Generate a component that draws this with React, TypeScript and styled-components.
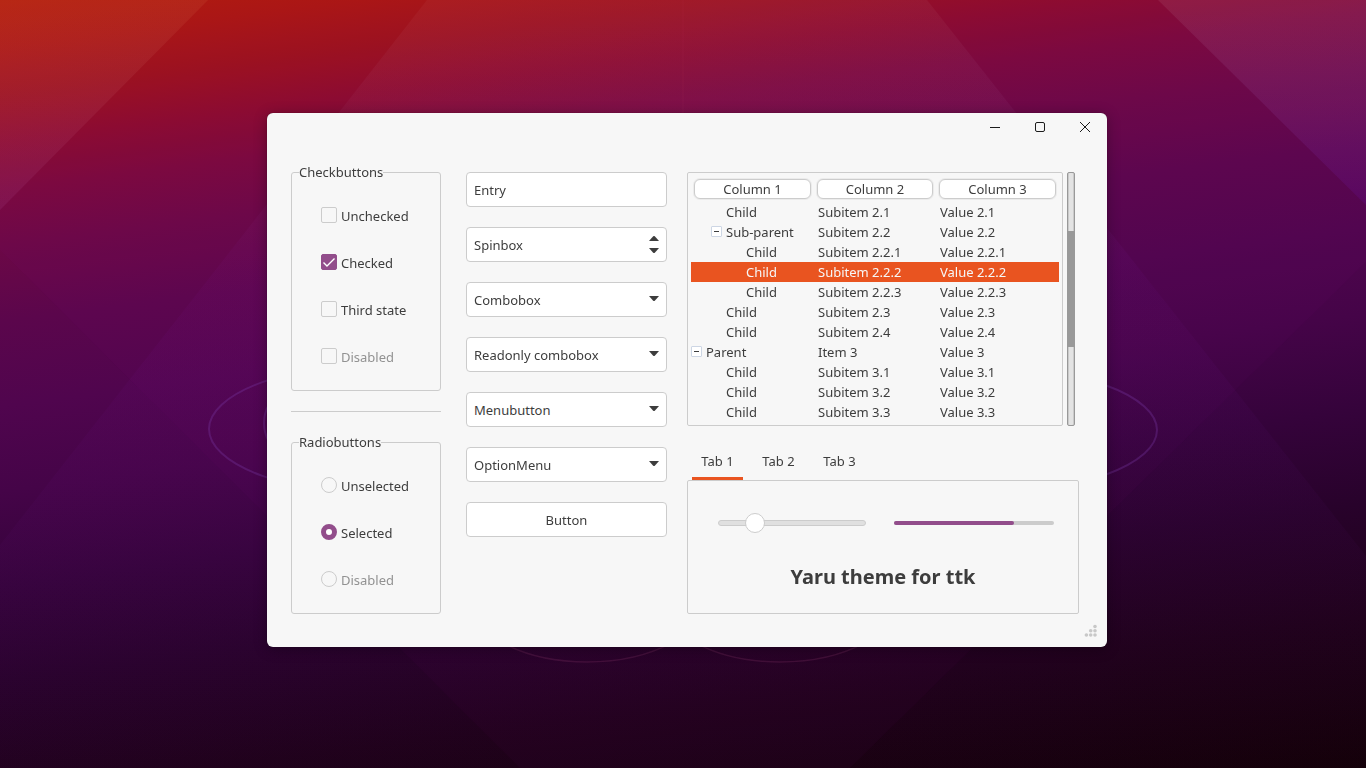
import React, { useState } from 'react';
import styled, { createGlobalStyle, css } from 'styled-components';

const ink = '#3d3d3d';
const line = '#cccccc';
const surface = '#f7f7f7';
const orange = '#e95420';
const purple = '#924d8b';

const GlobalStyle = createGlobalStyle`
  *, *::before, *::after { box-sizing: border-box; }
  body {
    margin: 0;
    background: #2c0530;
    color: ${ink};
    font: 13px/20px "Noto Sans", "Open Sans", sans-serif;
  }
  button, input, select { font: inherit; color: inherit; margin: 0; }
`;

const Desktop = styled.div`
  min-height: 100vh;
  display: flex;
  align-items: center;
  justify-content: center;
  padding: 0 0 8px 8px;
`;

const Backdrop = styled.svg`
  position: fixed;
  inset: 0;
  width: 100%;
  height: 100%;
  z-index: -1;
`;

const Window = styled.main`
  width: 100%;
  max-width: 840px;
  background: ${surface};
  border-radius: 6px;
  box-shadow: 0 2px 14px rgba(0, 0, 0, 0.3), 0 0 1px rgba(0, 0, 0, 0.5);
`;

const TitleBar = styled.header`
  display: flex;
  justify-content: flex-end;
`;

const WindowButton = styled.button`
  width: 45px;
  height: 28px;
  display: grid;
  place-items: center;
  padding: 0;
  border: 0;
  background: none;
`;

const Content = styled.div`
  display: grid;
  grid-template-columns: 155fr 201fr 392fr;
  column-gap: 20px;
  padding: 31px 28px 0 24px;
`;

const Options = styled.div`
  display: flex;
  flex-direction: column;
  padding-right: 5px;
`;

const Group = styled.fieldset`
  min-width: 0;
  margin: 0;
  padding: 19px 0 10px 29px;
  border: 1px solid ${line};
  border-radius: 3px;
`;

const Legend = styled.legend`
  height: 1px;
  margin-left: -22px;
  padding: 0;
  line-height: 1px;
`;

const Divider = styled.hr`
  width: 100%;
  height: 1px;
  margin: 20px 0 30px;
  border: 0;
  background: ${line};
`;

const OptionRow = styled.label<{ $disabled?: boolean }>`
  height: 47px;
  display: flex;
  align-items: center;
  gap: 4px;
  color: ${(p) => (p.$disabled ? '#929292' : ink)};
`;

const markBase = css`
  appearance: none;
  grid-area: 1 / 1;
  width: 16px;
  height: 16px;
  border: 1px solid ${line};
  background: ${surface};
`;

const MarkBox = styled.span`
  display: grid;
  place-items: center;
  padding-bottom: 1px;
  svg { grid-area: 1 / 1; pointer-events: none; }
`;

const Check = styled.input`
  ${markBase}
  border-radius: 2px;
  &:checked { background: ${purple}; border-color: ${purple}; }
  &:not(:checked) + svg { display: none; }
`;

const Radio = styled.input`
  ${markBase}
  border-radius: 50%;
  &:checked { border: 5px solid ${purple}; background: #fff; }
`;

const Fields = styled.div`
  display: flex;
  flex-direction: column;
  gap: 20px;
`;

const fieldFrame = css`
  height: 35px;
  border: 1px solid ${line};
  border-radius: 4px;
  background: #fff;
`;

const FieldFrame = styled.div`
  ${fieldFrame}
  display: grid;
  grid-template-columns: minmax(0, 1fr) 24px;
  align-items: center;
`;

const fieldText = css`
  width: 100%;
  height: 33px;
  padding: 0 7px;
  border: 0;
  background: none;
  text-align: left;
  outline: 0;
`;

const TextInput = styled.input`
  ${fieldText}
`;

const WideSelect = styled.select`
  ${fieldText}
  appearance: none;
  grid-area: 1 / 1 / 2 / 3;
`;

const WideButton = styled.button`
  ${fieldText}
  grid-area: 1 / 1 / 2 / 3;
`;

const ArrowCell = styled.span`
  grid-area: 1 / 2;
  display: grid;
  place-items: center;
  pointer-events: none;
`;

const IconButton = styled.button`
  display: grid;
  place-items: center;
  height: 13px;
  padding: 0;
  border: 0;
  background: none;
`;

const SpinButtons = styled.div`
  display: grid;
  grid-template-columns: 1fr;
`;

const Entry = styled.input`
  ${fieldFrame}
  width: 100%;
  padding: 0 7px;
  outline: 0;
`;

const PushButton = styled.button`
  ${fieldFrame}
  padding: 0;
  text-align: center;
`;

const TreeArea = styled.div`
  display: flex;
  gap: 4px;
  padding-right: 4px;
`;

const TreeFrame = styled.div`
  flex: 1;
  min-width: 0;
  padding: 3px;
  border: 1px solid ${line};
  border-radius: 2px;
`;

const Tree = styled.table`
  width: 100%;
  table-layout: fixed;
  border-collapse: collapse;
`;

const HeadCell = styled.th`
  height: 26px;
  padding: 3px;
  font-weight: 400;
  vertical-align: top;
`;

const HeadButton = styled.button`
  display: block;
  width: 100%;
  height: 20px;
  padding: 0;
  border: 1px solid ${line};
  border-radius: 6px;
  background: #fff;
  line-height: 18px;
  box-shadow: 0 0 0 1px #ebebeb;
`;

const TreeRow = styled.tr<{ $selected: boolean }>`
  height: 20px;
  ${(p) => p.$selected && css`background: ${orange}; color: #f7f7f7;`}
`;

const Cell = styled.td`
  padding: 0 0 0 4px;
  white-space: nowrap;
`;

const NodeCell = styled(Cell)<{ $level: number }>`
  padding-left: ${(p) => p.$level * 20}px;
`;

const Node = styled.div<{ $leaf: boolean }>`
  display: flex;
  align-items: center;
  gap: 4px;
  padding-left: ${(p) => (p.$leaf ? 15 : 0)}px;
`;

const Expander = styled.button`
  width: 11px;
  height: 11px;
  display: grid;
  place-items: center;
  margin-bottom: 1px;
  padding: 0;
  border: 1px solid #cdd6e4;
  border-radius: 1px;
  background: #fff;
`;

const ScrollTrack = styled.div`
  width: 8px;
  display: flex;
  flex-direction: column;
  padding-top: 58px;
  border: 1px solid #999999;
  border-radius: 2px;
  background: #e3e3e3;
  box-shadow: inset 1px 0 #cacaca, inset -1px 0 #cacaca;
`;

const ScrollThumb = styled.div`
  height: 116px;
  background: #999999;
`;

const TabList = styled.div`
  display: flex;
  gap: 10px;
  margin-top: 19px;
  padding-left: 5px;
`;

const Tab = styled.button<{ $active: boolean }>`
  width: 51px;
  height: 35px;
  padding: 0;
  border: 0;
  border-bottom: 3px solid ${(p) => (p.$active ? orange : 'transparent')};
  background: none;
`;

const TabPanel = styled.section`
  padding: 32px 0 22px;
  border: 1px solid ${line};
  border-radius: 2px;
`;

const Meters = styled.div`
  display: grid;
  grid-template-columns: 148fr 160fr;
  column-gap: 28px;
  align-items: center;
  padding: 0 24px 0 30px;
`;

const Slider = styled.input`
  appearance: none;
  width: 100%;
  height: 20px;
  background: none;
  &::-webkit-slider-runnable-track {
    height: 6px;
    border: 1px solid ${line};
    border-radius: 3px;
    background: #e0e0e0;
  }
  &::-webkit-slider-thumb {
    appearance: none;
    width: 20px;
    height: 20px;
    margin-top: -8px;
    border: 1px solid ${line};
    border-radius: 50%;
    background: #fff;
  }
`;

const Progress = styled.progress`
  appearance: none;
  display: block;
  width: 100%;
  height: 4px;
  border: 0;
  &::-webkit-progress-bar { background: ${line}; border-radius: 2px; }
  &::-webkit-progress-value { background: ${purple}; border-radius: 2px; }
`;

const Title = styled.h1`
  margin: 30px 0 0;
  font-size: 20px;
  line-height: 28px;
  font-weight: 700;
  text-align: center;
`;

const Footer = styled.footer`
  height: 33px;
  display: flex;
  justify-content: flex-end;
  padding: 10px 10px 0 0;
`;

function Wallpaper() {
  return (
    <Backdrop viewBox="0 0 1366 768" preserveAspectRatio="xMidYMid slice" aria-hidden="true">
      <defs>
        <linearGradient id="sky" gradientUnits="userSpaceOnUse" x1="0" y1="0" x2="121" y2="930">
          <stop offset="0" stopColor="#b41c08" />
          <stop offset="0.05" stopColor="#ab1611" />
          <stop offset="0.1" stopColor="#9c111d" />
          <stop offset="0.15" stopColor="#8c0b2e" />
          <stop offset="0.2" stopColor="#7b093d" />
          <stop offset="0.26" stopColor="#6c0846" />
          <stop offset="0.34" stopColor="#5b064c" />
          <stop offset="0.43" stopColor="#50054e" />
          <stop offset="0.52" stopColor="#450448" />
          <stop offset="0.62" stopColor="#35033b" />
          <stop offset="0.72" stopColor="#28022b" />
          <stop offset="0.84" stopColor="#1e0119" />
          <stop offset="1" stopColor="#120006" />
        </linearGradient>
        <linearGradient id="facet" x1="0" y1="0" x2="0" y2="1">
          <stop offset="0" stopColor="#ffffff" stopOpacity="0.04" />
          <stop offset="0.35" stopColor="#9020d0" stopOpacity="0.05" />
          <stop offset="1" stopColor="#9020c0" stopOpacity="0.02" />
        </linearGradient>
        <linearGradient id="corner" x1="0" y1="0" x2="0" y2="1">
          <stop offset="0" stopColor="#ffd080" stopOpacity="0.07" />
          <stop offset="1" stopColor="#f0a0ff" stopOpacity="0.07" />
        </linearGradient>
        <linearGradient id="cornerRight" x1="0" y1="0" x2="0" y2="1">
          <stop offset="0" stopColor="#ffffff" stopOpacity="0.07" />
          <stop offset="1" stopColor="#7010e0" stopOpacity="0.12" />
        </linearGradient>
      </defs>
      <rect width="1366" height="768" fill="url(#sky)" />
      <path d="M427 0H927L1366 556V768H0V545Z" fill="url(#facet)" />
      <path d="M0 250L520 768H850L1366 262V0H0Z" fill="#a010a0" fillOpacity="0.04" />
      <path d="M0 0H208L0 210Z" fill="url(#corner)" />
      <path d="M1158 0H1366V205Z" fill="url(#cornerRight)" />
      <path d="M683 0V113" stroke="#c04060" strokeOpacity="0.1" />
      <g fill="none" stroke="#7a3aa8" strokeOpacity="0.33" strokeWidth="2">
        <ellipse cx="389" cy="429" rx="180" ry="66" />
        <ellipse cx="324" cy="423" rx="60" ry="46" />
        <ellipse cx="977" cy="430" rx="180" ry="64" />
      </g>
      <g fill="none" stroke="#7a3060" strokeOpacity="0.3" strokeWidth="1.5">
        <ellipse cx="587" cy="596" rx="120" ry="66" />
        <ellipse cx="780" cy="596" rx="120" ry="66" />
      </g>
    </Backdrop>
  );
}

function Arrow({ up = false }: { up?: boolean }) {
  return (
    <svg width="10" height="7" viewBox="0 0 10 7" aria-hidden="true">
      <path d={up ? 'M0 6L4.2 1.3Q5 .6 5.8 1.3L10 6Z' : 'M0 0L4.2 4.7Q5 5.4 5.8 4.7L10 0Z'} fill={ink} />
    </svg>
  );
}

interface NodeData {
  name: string;
  level: number;
  item: string;
  value: string;
  parent?: boolean;
}

const nodes: NodeData[] = [
  { name: 'Child', level: 1, item: 'Subitem 2.1', value: 'Value 2.1' },
  { name: 'Sub-parent', level: 1, item: 'Subitem 2.2', value: 'Value 2.2', parent: true },
  { name: 'Child', level: 2, item: 'Subitem 2.2.1', value: 'Value 2.2.1' },
  { name: 'Child', level: 2, item: 'Subitem 2.2.2', value: 'Value 2.2.2' },
  { name: 'Child', level: 2, item: 'Subitem 2.2.3', value: 'Value 2.2.3' },
  { name: 'Child', level: 1, item: 'Subitem 2.3', value: 'Value 2.3' },
  { name: 'Child', level: 1, item: 'Subitem 2.4', value: 'Value 2.4' },
  { name: 'Parent', level: 0, item: 'Item 3', value: 'Value 3', parent: true },
  { name: 'Child', level: 1, item: 'Subitem 3.1', value: 'Value 3.1' },
  { name: 'Child', level: 1, item: 'Subitem 3.2', value: 'Value 3.2' },
  { name: 'Child', level: 1, item: 'Subitem 3.3', value: 'Value 3.3' },
];

function CheckOption({ label, checked, disabled }: { label: string; checked?: boolean; disabled?: boolean }) {
  return (
    <OptionRow $disabled={disabled}>
      <MarkBox>
        <Check type="checkbox" defaultChecked={checked} disabled={disabled} />
        <svg width="16" height="16" viewBox="0 0 16 16" aria-hidden="true">
          <path d="M2.5 8.5L6 12L13.5 4.5" fill="none" stroke="#fff" strokeWidth="1.4" />
        </svg>
      </MarkBox>
      {label}
    </OptionRow>
  );
}

function RadioOption({ label, checked, disabled }: { label: string; checked?: boolean; disabled?: boolean }) {
  return (
    <OptionRow $disabled={disabled}>
      <MarkBox>
        <Radio type="radio" name="radio" defaultChecked={checked} disabled={disabled} />
      </MarkBox>
      {label}
    </OptionRow>
  );
}

function SelectField({ label }: { label: string }) {
  return (
    <FieldFrame>
      <WideSelect aria-label={label}>
        <option>{label}</option>
      </WideSelect>
      <ArrowCell><Arrow /></ArrowCell>
    </FieldFrame>
  );
}

export default function App() {
  const [selected, setSelected] = useState(3);
  const [tab, setTab] = useState(0);

  return (
    <>
      <GlobalStyle />
      <Wallpaper />
      <Desktop>
        <Window>
          <TitleBar>
            <WindowButton aria-label="Minimize">
              <svg width="12" height="12" viewBox="0 0 12 12"><path d="M1 6.5H11" stroke="#1c1c1c" /></svg>
            </WindowButton>
            <WindowButton aria-label="Maximize">
              <svg width="12" height="12" viewBox="0 0 12 12">
                <rect x="1.5" y="1.5" width="9" height="9" rx="1.5" fill="none" stroke="#1c1c1c" />
              </svg>
            </WindowButton>
            <WindowButton aria-label="Close">
              <svg width="12" height="12" viewBox="0 0 12 12">
                <path d="M1 1L11 11M11 1L1 11" stroke="#1c1c1c" />
              </svg>
            </WindowButton>
          </TitleBar>

          <Content>
            <Options>
              <Group>
                <Legend>Checkbuttons</Legend>
                <CheckOption label="Unchecked" />
                <CheckOption label="Checked" checked />
                <CheckOption label="Third state" />
                <CheckOption label="Disabled" disabled />
              </Group>
              <Divider />
              <Group>
                <Legend>Radiobuttons</Legend>
                <RadioOption label="Unselected" />
                <RadioOption label="Selected" checked />
                <RadioOption label="Disabled" disabled />
              </Group>
            </Options>

            <Fields>
              <Entry type="text" aria-label="Entry" defaultValue="Entry" />
              <FieldFrame>
                <TextInput type="text" aria-label="Spinbox" defaultValue="Spinbox" />
                <SpinButtons>
                  <IconButton aria-label="Increase"><Arrow up /></IconButton>
                  <IconButton aria-label="Decrease"><Arrow /></IconButton>
                </SpinButtons>
              </FieldFrame>
              <FieldFrame>
                <TextInput type="text" aria-label="Combobox" defaultValue="Combobox" />
                <IconButton aria-label="Show options"><Arrow /></IconButton>
              </FieldFrame>
              <SelectField label="Readonly combobox" />
              <FieldFrame>
                <WideButton aria-haspopup="menu">Menubutton</WideButton>
                <ArrowCell><Arrow /></ArrowCell>
              </FieldFrame>
              <SelectField label="OptionMenu" />
              <PushButton>Button</PushButton>
            </Fields>

            <div>
              <TreeArea>
                <TreeFrame>
                  <Tree>
                    <colgroup>
                      <col width="123" />
                      <col width="122" />
                      <col />
                    </colgroup>
                    <thead>
                      <tr>
                        {['Column 1', 'Column 2', 'Column 3'].map((name) => (
                          <HeadCell key={name} scope="col"><HeadButton>{name}</HeadButton></HeadCell>
                        ))}
                      </tr>
                    </thead>
                    <tbody>
                      {nodes.map((node, i) => (
                        <TreeRow key={node.item} $selected={i === selected} onClick={() => setSelected(i)}>
                          <NodeCell $level={node.level}>
                            <Node $leaf={!node.parent}>
                              {node.parent && (
                                <Expander aria-label={`Collapse ${node.name}`}>
                                  <svg width="5" height="1" viewBox="0 0 5 1"><path d="M0 .5H5" stroke={ink} /></svg>
                                </Expander>
                              )}
                              {node.name}
                            </Node>
                          </NodeCell>
                          <Cell>{node.item}</Cell>
                          <Cell>{node.value}</Cell>
                        </TreeRow>
                      ))}
                    </tbody>
                  </Tree>
                </TreeFrame>
                <ScrollTrack><ScrollThumb /></ScrollTrack>
              </TreeArea>

              <TabList role="tablist">
                {['Tab 1', 'Tab 2', 'Tab 3'].map((name, i) => (
                  <Tab key={name} role="tab" aria-selected={i === tab} $active={i === tab} onClick={() => setTab(i)}>
                    {name}
                  </Tab>
                ))}
              </TabList>
              <TabPanel role="tabpanel">
                <Meters>
                  <Slider type="range" aria-label="Scale" min="0" max="100" defaultValue="21" />
                  <Progress aria-label="Progress" max={100} value={75} />
                </Meters>
                <Title>Yaru theme for ttk</Title>
              </TabPanel>
            </div>
          </Content>

          <Footer>
            <svg width="13" height="13" viewBox="0 0 13 13" fill="#c8c8c8" aria-hidden="true">
              <circle cx="11" cy="2.5" r="1.8" />
              <circle cx="6.7" cy="6.7" r="1.8" />
              <circle cx="11" cy="6.7" r="1.8" />
              <circle cx="2.4" cy="11" r="1.8" />
              <circle cx="6.7" cy="11" r="1.8" />
              <circle cx="11" cy="11" r="1.8" />
            </svg>
          </Footer>
        </Window>
      </Desktop>
    </>
  );
}
